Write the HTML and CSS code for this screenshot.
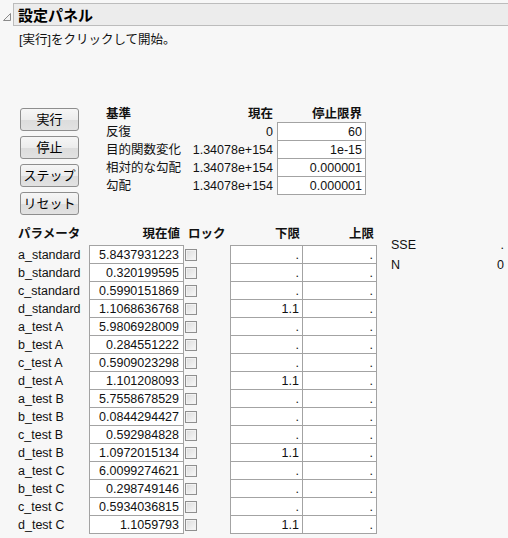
FILE: index.html
```html
<!DOCTYPE html>
<html lang="ja">
<head>
<meta charset="utf-8">
<link rel="stylesheet" href="styles.css">
</head>
<body>
<div class="outline">
  <svg class="disclosure" width="10" height="10" viewBox="0 0 10 10"><path d="M8.5 1.5 L8.5 8.5 L1.5 8.5 Z" fill="#f4f4f4" stroke="#8a8a8a" stroke-width="1"/></svg>
  <div class="titlebar">設定パネル</div>
</div>
<div class="content">
  <div class="intro">[実行]をクリックして開始。</div>
  <div class="controls">
    <div class="buttons">
      <div class="btn">実行</div>
      <div class="btn">停止</div>
      <div class="btn">ステップ</div>
      <div class="btn">リセット</div>
    </div>
    <div class="criteria">
      <div class="hd">基準</div><div class="hd num">現在</div><div class="hd num lim">停止限界</div>
      <div>反復</div><div class="num">0</div><div class="box">60</div>
      <div>目的関数変化</div><div class="num">1.34078e+154</div><div class="box">1e-15</div>
      <div>相対的な勾配</div><div class="num">1.34078e+154</div><div class="box">0.000001</div>
      <div>勾配</div><div class="num">1.34078e+154</div><div class="box">0.000001</div>
    </div>
  </div>
  <div class="paramarea">
    <div class="params">
      <div class="hd">パラメータ</div><div class="hd num cur">現在値</div><div class="hd lock">ロック</div><div class="hd num lo">下限</div><div class="hd num up">上限</div>

      <div class="name">a_standard</div><div class="box val">5.8437931223</div><div class="chk"><span></span></div><div class="box lo">.</div><div class="box up">.</div>
      <div class="name">b_standard</div><div class="box val">0.320199595</div><div class="chk"><span></span></div><div class="box lo">.</div><div class="box up">.</div>
      <div class="name">c_standard</div><div class="box val">0.5990151869</div><div class="chk"><span></span></div><div class="box lo">.</div><div class="box up">.</div>
      <div class="name">d_standard</div><div class="box val">1.1068636768</div><div class="chk"><span></span></div><div class="box lo">1.1</div><div class="box up">.</div>
      <div class="name">a_test A</div><div class="box val">5.9806928009</div><div class="chk"><span></span></div><div class="box lo">.</div><div class="box up">.</div>
      <div class="name">b_test A</div><div class="box val">0.284551222</div><div class="chk"><span></span></div><div class="box lo">.</div><div class="box up">.</div>
      <div class="name">c_test A</div><div class="box val">0.5909023298</div><div class="chk"><span></span></div><div class="box lo">.</div><div class="box up">.</div>
      <div class="name">d_test A</div><div class="box val">1.101208093</div><div class="chk"><span></span></div><div class="box lo">1.1</div><div class="box up">.</div>
      <div class="name">a_test B</div><div class="box val">5.7558678529</div><div class="chk"><span></span></div><div class="box lo">.</div><div class="box up">.</div>
      <div class="name">b_test B</div><div class="box val">0.0844294427</div><div class="chk"><span></span></div><div class="box lo">.</div><div class="box up">.</div>
      <div class="name">c_test B</div><div class="box val">0.592984828</div><div class="chk"><span></span></div><div class="box lo">.</div><div class="box up">.</div>
      <div class="name">d_test B</div><div class="box val">1.0972015134</div><div class="chk"><span></span></div><div class="box lo">1.1</div><div class="box up">.</div>
      <div class="name">a_test C</div><div class="box val">6.0099274621</div><div class="chk"><span></span></div><div class="box lo">.</div><div class="box up">.</div>
      <div class="name">b_test C</div><div class="box val">0.298749146</div><div class="chk"><span></span></div><div class="box lo">.</div><div class="box up">.</div>
      <div class="name">c_test C</div><div class="box val">0.5934036815</div><div class="chk"><span></span></div><div class="box lo">.</div><div class="box up">.</div>
      <div class="name">d_test C</div><div class="box val">1.1059793</div><div class="chk"><span></span></div><div class="box lo">1.1</div><div class="box up">.</div>
    </div>
    <div class="stats">
      <div>SSE</div><div class="num">.</div>
      <div>N</div><div class="num">0</div>
    </div>
  </div>
</div>
</body>
</html>
```

FILE: styles.css
```css
html, body {
  margin: 0;
  padding: 0;
  background: #f7f7f7;
}
body {
  width: 508px;
  height: 538px;
  overflow: hidden;
  font-family: "Liberation Sans", "Noto Sans CJK JP", sans-serif;
  font-size: 12.5px;
  color: #111;
}
.outline {
  display: flex;
  align-items: flex-start;
  padding-top: 3px;
}
.disclosure {
  margin: 9px 0 0 2px;
  flex: none;
}
.titlebar {
  flex: 1;
  margin-left: 1px;
  height: 21px;
  line-height: 21px;
  background: #ececec;
  border: 1px solid #bcbcbc;
  border-right: none;
  padding-left: 4px;
  font-family: "Noto Sans CJK JP", sans-serif;
  font-weight: bold;
  font-size: 15px;
  color: #000;
}
.content {
  padding-left: 18px;
}
.intro {
  margin-top: 5px;
  padding-left: 1px;
  line-height: 18px;
  font-size: 12.5px;
}
.controls {
  display: flex;
  align-items: flex-start;
  margin-top: 56px;
}
.buttons {
  display: flex;
  flex-direction: column;
  gap: 5px;
  margin: 3px 0 0 2px;
  width: 59px;
}
.btn {
  box-sizing: border-box;
  height: 23px;
  line-height: 21px;
  text-align: center;
  border: 1px solid #8e8e8e;
  border-radius: 3px;
  background: linear-gradient(#f6f6f6 0%, #ececec 50%, #dcdcdc 51%, #e2e2e2 100%);
  font-size: 13px;
  color: #000;
}
.criteria {
  margin-left: 27px;
  display: grid;
  grid-template-columns: 80px 91px 89px;
  grid-auto-rows: 18px;
  line-height: 18px;
}
.hd {
  font-weight: bold;
}
.num {
  text-align: right;
  padding-right: 4px;
}
.criteria .lim {
  padding-right: 4px;
}
.box {
  background: #fff;
  border: 1px solid #a3a3a3;
  margin-top: -1px;
  text-align: right;
  padding-right: 3px;
  line-height: 18px;
}
.paramarea {
  display: flex;
  align-items: flex-start;
  margin-top: 10px;
}
.params {
  display: grid;
  grid-template-columns: 71px 95px 46px 73px 74px;
  grid-template-rows: 21px;
  grid-auto-rows: 18px;
  line-height: 18px;
}
.params .hd {
  align-self: start;
}
.params .cur {
  padding-right: 4px;
}
.params .lock {
  padding-left: 4px;
}
.params .hd.lo {
  padding-right: 3px;
}
.params .hd.up {
  padding-right: 3px;
}
.box.val {
  padding-right: 4px;
}
.box.up {
  margin-left: -1px;
}
.chk {
  display: flex;
  align-items: center;
}
.chk span {
  box-sizing: border-box;
  width: 12px;
  height: 12px;
  margin-left: 1px;
  border: 1px solid #8f8f8f;
  background: linear-gradient(135deg, #dcdcdc, #f8f8f8);
  box-shadow: inset 0 0 0 1px #f2f2f2;
}
.stats {
  margin: 10px 0 0 14px;
  display: grid;
  grid-template-columns: 60px 53px;
  grid-auto-rows: 20px;
  line-height: 20px;
}
.stats .num {
  padding-right: 0;
}
```
